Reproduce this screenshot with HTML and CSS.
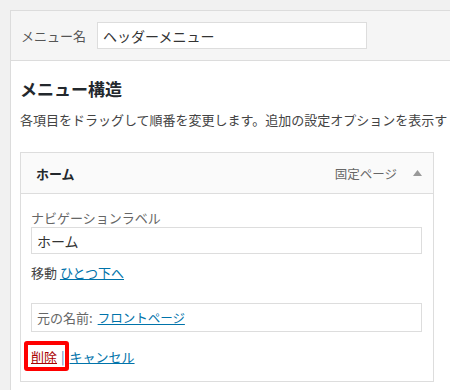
FILE: index.html
```html
<!DOCTYPE html>
<html lang="ja">
<head>
  <meta charset="UTF-8" />
  <meta name="viewport" content="width=device-width, initial-scale=1.0" />
  <title>メニュー編集</title>
  <link rel="stylesheet" href="styles.css">
</head>
<body>
  <div class="menu-edit">
    <div class="menu-head">
      <label class="menu-name-label" for="menu-name">メニュー名</label>
      <input class="menu-name" id="menu-name" type="text" value="ヘッダーメニュー" />
    </div>

    <div class="menu-body">
      <h3>メニュー構造</h3>
      <p class="help">各項目をドラッグして順番を変更します。追加の設定オプションを表示す</p>

      <div class="menu-item">
        <div class="item-handle">
          <span class="item-title">ホーム</span>
          <span class="item-type">固定ページ</span>
          <svg class="item-arrow" width="9" height="6" viewBox="0 0 9 6"><path d="M4.5 0 L9 6 L0 6 Z" fill="#999"/></svg>
        </div>

        <div class="item-settings">
          <label class="field-label" for="nav-label">ナビゲーションラベル</label>
          <input class="field-input" id="nav-label" type="text" value="ホーム" />

          <p class="move">移動 <a href="#">ひとつ下へ</a></p>

          <div class="original">元の名前: <a href="#">フロントページ</a></div>

          <div class="actions">
            <span class="highlight"><a class="delete" href="#">削除</a><span class="sep">|</span></span><a href="#">キャンセル</a>
          </div>
        </div>
      </div>
    </div>
  </div>
</body>
</html>
```

FILE: styles.css
```css
body {
  margin: 0;
  padding: 10px 0 0 10px;
  background: #f1f1f1;
  font-family: "Noto Sans CJK JP", "Noto Sans", sans-serif;
  font-size: 13px;
  color: #444;
  overflow: hidden;
}

a {
  color: #0073aa;
}

.menu-edit {
  width: 520px;
  background: #fff;
  border: 1px solid #dcdcdc;
  min-height: 420px;
}

.menu-head {
  display: flex;
  align-items: center;
  height: 49px;
  padding: 0 10px;
  background: #f5f5f5;
  border-bottom: 1px solid #dcdcdc;
}

.menu-name-label {
  color: #555;
  margin-right: 11px;
}

.menu-name {
  width: 270px;
  height: 27px;
  box-sizing: border-box;
  border: 1px solid #ddd;
  padding: 0 5px;
  font-family: inherit;
  font-size: 14px;
  color: #333;
  outline: none;
}

.menu-body {
  padding: 16px 9px 0;
}

h3 {
  margin: 0;
  font-size: 17px;
  line-height: 24px;
  color: #23282d;
}

.help {
  margin: 9px 0 22px;
  line-height: 20px;
  white-space: nowrap;
  color: #444;
}

.menu-item {
  width: 414px;
  box-sizing: border-box;
  border: 1px solid #ddd;
}

.item-handle {
  display: flex;
  align-items: center;
  height: 40px;
  padding: 0 11px 0 15px;
  background: #fafafa;
  border-bottom: 1px solid #ddd;
}

.item-title {
  font-weight: bold;
  color: #23282d;
  flex: 1;
}

.item-type {
  color: #666;
  font-size: 12.5px;
  margin-right: 16px;
}

.item-settings {
  padding: 15px 11px 15px 10px;
}

.field-label {
  display: block;
  line-height: 18px;
  color: #666;
}

.field-input {
  display: block;
  width: 100%;
  height: 27px;
  box-sizing: border-box;
  border: 1px solid #ddd;
  padding: 0 5px;
  font-family: inherit;
  font-size: 14px;
  color: #333;
  outline: none;
}

.move {
  margin: 10px 0 0;
  line-height: 18px;
}

.original {
  margin-top: 21px;
  height: 29px;
  box-sizing: border-box;
  border: 1px solid #ddd;
  padding: 0 5px;
  display: flex;
  align-items: center;
  gap: 5px;
  color: #666;
}

.original a {
  font-size: 12.5px;
}

.actions {
  margin-top: 16px;
  line-height: 18px;
}

.highlight {
  position: relative;
}

.highlight::after {
  content: "";
  position: absolute;
  left: -7px;
  top: -6px;
  width: 37px;
  height: 22px;
  border: 4px solid #f00;
  border-radius: 3px;
}

.delete {
  color: #a00;
}

.sep {
  color: #3582c4;
  margin: 0 5px 0 4px;
}
```
